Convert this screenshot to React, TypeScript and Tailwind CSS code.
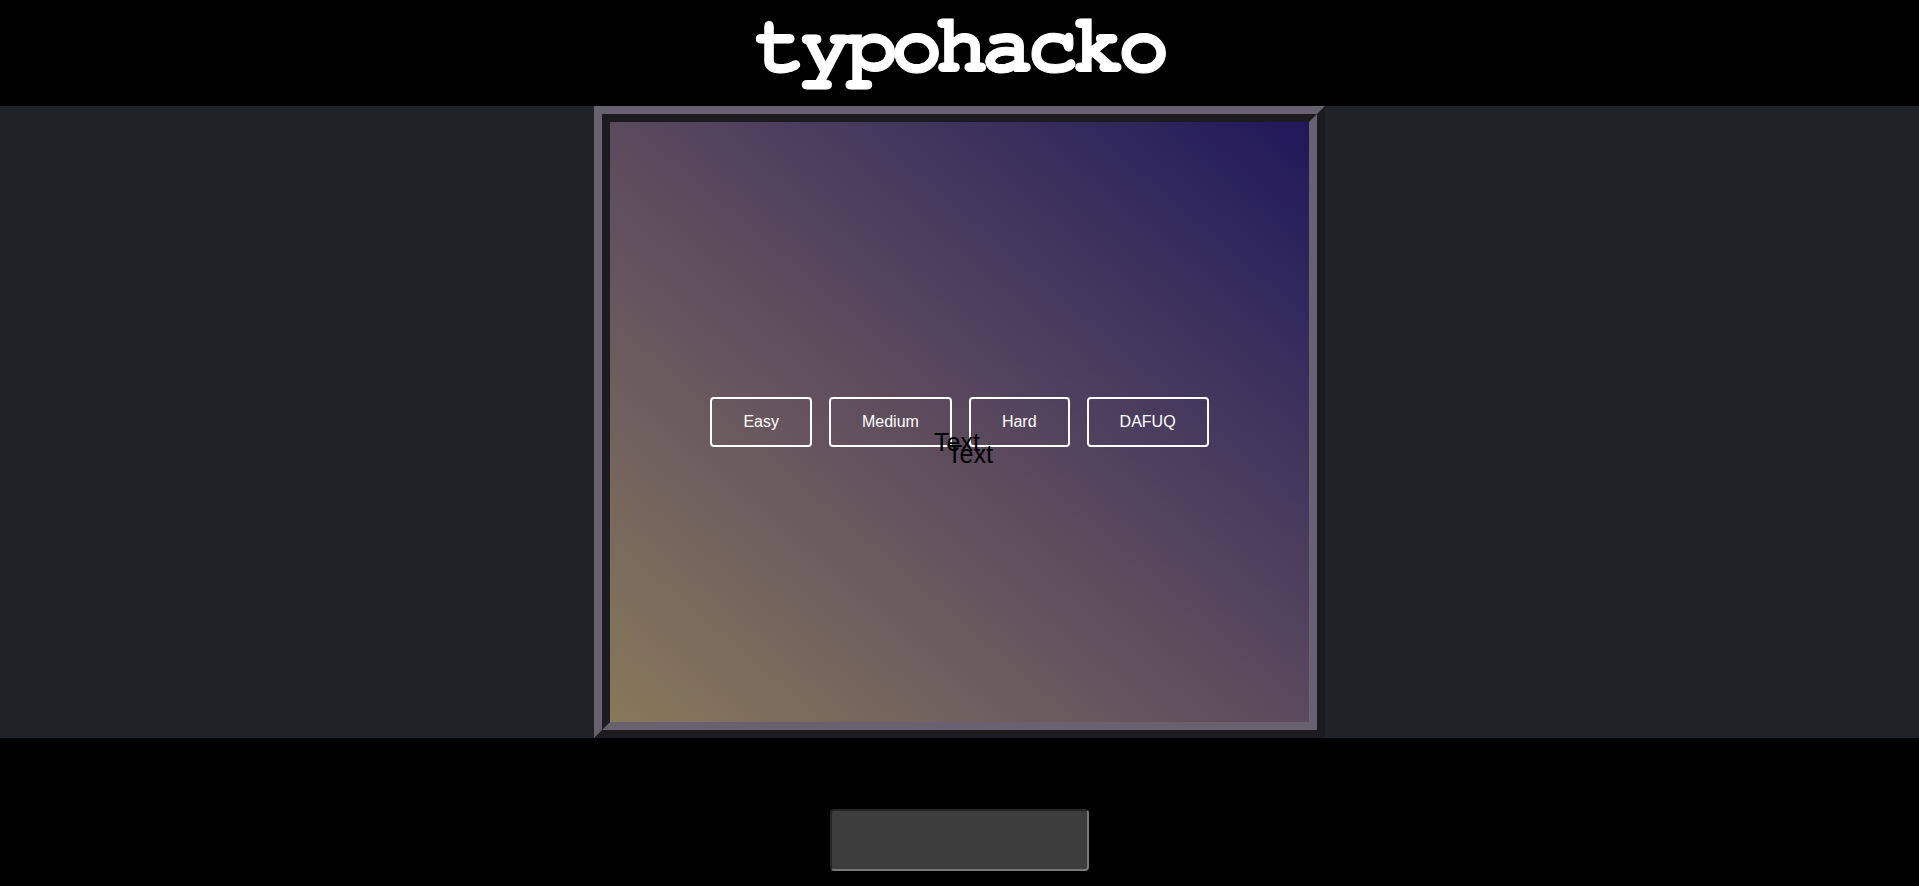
const LEVELS = ['Easy', 'Medium', 'Hard', 'DAFUQ']

function Board() {
  return (
    // ridge frame drawn as two nested borders
    <div className="border-8 border-t-[#676170] border-l-[#676170] border-r-[#1c1b1f] border-b-[#1c1b1f]">
      <div className="border-8 border-t-[#1c1b1f] border-l-[#1c1b1f] border-r-[#676170] border-b-[#676170]">
        <div className="relative w-[699px] h-[600px] bg-gradient-to-tr from-[#88795a] via-[#5b495d] to-[#21165a] flex items-center justify-center font-['Liberation_Sans',Arial,sans-serif]">
          <div className="flex gap-[17px]">
            {LEVELS.map((lvl) => (
              <button
                key={lvl}
                type="button"
                className="border-2 border-white rounded-[4px] px-[31px] py-[14px] text-[16px] leading-[18px] text-white bg-transparent"
              >
                {lvl}
              </button>
            ))}
          </div>

          {/* stray labels lying over the buttons */}
          <span className="absolute left-[324px] top-[306px] text-[25px] leading-[28px] text-black">Text</span>
          <span className="absolute left-[337px] top-[318px] text-[25px] leading-[28px] text-black">Text</span>
        </div>
      </div>
    </div>
  )
}

export default function App() {
  return (
    <div className="min-h-[886px] bg-black flex flex-col">
      <header className="h-[106px] flex justify-center bg-black overflow-hidden">
        <h1 className="mt-[5px] text-[84px] leading-none tracking-[-5px] font-bold text-white [-webkit-text-stroke:1px_white] font-['Nimbus_Mono_PS','FreeMono','Courier_New','Liberation_Mono',monospace]">
          typohacko
        </h1>
      </header>

      <main className="h-[632px] bg-[#1f2227] flex justify-center">
        <Board />
      </main>

      <div className="flex justify-center pt-[71px]">
        <textarea className="w-[259px] h-[62px] rounded-[4px] bg-[#3d3d3d] border-2 border-t-[#262626] border-l-[#262626] border-r-[#767676] border-b-[#767676] resize-none outline-none" />
      </div>
    </div>
  )
}
